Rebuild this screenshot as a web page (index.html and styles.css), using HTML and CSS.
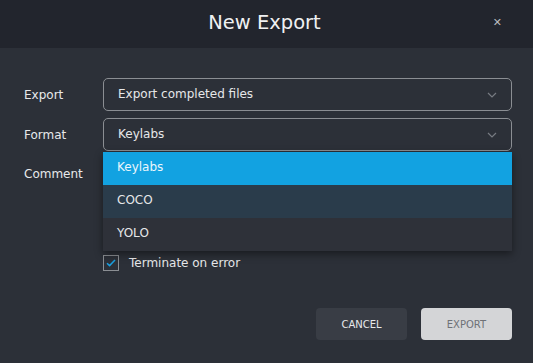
FILE: index.html
```html
<!doctype html>
<html>
<head>
  <meta charset="utf-8">
  <link rel="stylesheet" href="styles.css">
</head>
<body>
  <div class="modal">
    <div class="modal-head">
      <h1>New Export</h1>
      <span class="close">&#x2715;</span>
    </div>
    <div class="modal-body">
      <div class="row">
        <label class="lbl">Export</label>
        <div class="select">
          <span>Export completed files</span>
          <svg class="chev" width="10" height="6" viewBox="0 0 10 6"><path d="M1 1l4 4 4-4" fill="none" stroke="#777b82" stroke-width="1.2"/></svg>
        </div>
      </div>
      <div class="row">
        <label class="lbl">Format</label>
        <div class="select open">
          <span>Keylabs</span>
          <svg class="chev" width="10" height="6" viewBox="0 0 10 6"><path d="M1 1l4 4 4-4" fill="none" stroke="#777b82" stroke-width="1.2"/></svg>
          <ul class="menu">
            <li class="active">Keylabs</li>
            <li class="hover">COCO</li>
            <li>YOLO</li>
          </ul>
        </div>
      </div>
      <div class="row top">
        <label class="lbl">Comment</label>
        <div class="textarea"></div>
      </div>
      <div class="row">
        <span class="lbl"></span>
        <label class="check">
          <span class="box">
            <svg width="10" height="8" viewBox="0 0 10 8"><path d="M1 4.2l2.6 2.4L9 1" fill="none" stroke="#1a9fdf" stroke-width="1.5"/></svg>
          </span>
          Terminate on error
        </label>
      </div>
      <div class="actions">
        <button class="btn cancel">CANCEL</button>
        <button class="btn export" disabled>EXPORT</button>
      </div>
    </div>
  </div>
</body>
</html>
```
FILE: styles.css
```css
body {
  margin: 0;
  background-color: #2c3038;
  font-family: "DejaVu Sans", sans-serif;
  color: #e6e7e9;
}
.modal {
  width: 533px;
  height: 363px;
  background-color: #2c3038;
}
.modal-head {
  height: 48px;
  background-color: #22252d;
  display: flex;
  align-items: center;
  justify-content: center;
  position: relative;
}
.modal-head h1 {
  margin: 0;
  font-size: 19.5px;
  font-weight: normal;
  color: #f0f1f2;
  padding-bottom: 4px;
  padding-right: 4px;
}
.close {
  position: absolute;
  right: 31px;
  top: 16px;
  font-size: 11px;
  color: #b9bbbf;
}
.modal-body {
  padding: 30px 21px 0 24px;
}
.row {
  display: flex;
  align-items: center;
  margin-bottom: 7px;
}
.row.top {
  align-items: flex-start;
}
.lbl {
  width: 79px;
  flex: none;
  font-size: 12px;
  color: #e8e9eb;
}
.row.top .lbl {
  padding-top: 9px;
}
.select {
  flex: 1;
  height: 31px;
  border: 1px solid #8b8e93;
  border-radius: 5px;
  display: flex;
  align-items: center;
  justify-content: space-between;
  padding: 0 14px 0 14px;
  font-size: 12px;
  position: relative;
}
.select span {
  padding-bottom: 2px;
}
.menu {
  list-style: none;
  margin: 0;
  padding: 0;
  position: absolute;
  left: -1px;
  right: -1px;
  top: 33px;
  background-color: #2e3139;
  box-shadow: 0 3px 8px rgba(0, 0, 0, 0.45);
}
.menu li {
  height: 33px;
  line-height: 31px;
  padding-left: 14px;
  font-size: 12px;
  color: #e6e7e9;
}
.menu li.active {
  background-color: #12a2e1;
  color: #eaf6fc;
}
.menu li.hover {
  background-color: #2a3c4b;
}
.textarea {
  flex: 1;
  height: 86px;
  border: 1px solid #8b8e93;
  border-radius: 5px;
  margin-bottom: 2px;
}
.check {
  display: flex;
  align-items: center;
  font-size: 12px;
  color: #e6e7e9;
}
.box {
  width: 14px;
  height: 14px;
  border: 1px solid #8b8e93;
  margin-right: 10px;
  display: flex;
  align-items: center;
  justify-content: center;
}
.actions {
  display: flex;
  justify-content: flex-end;
  gap: 14px;
  margin-top: 37px;
}
.btn {
  width: 91px;
  height: 32px;
  border: none;
  border-radius: 4px;
  font-family: "DejaVu Sans", sans-serif;
  font-size: 10px;
}
.cancel {
  background-color: #393d45;
  color: #e8e9eb;
}
.export {
  background-color: #d4d5d7;
  color: #6e7176;
}
```
